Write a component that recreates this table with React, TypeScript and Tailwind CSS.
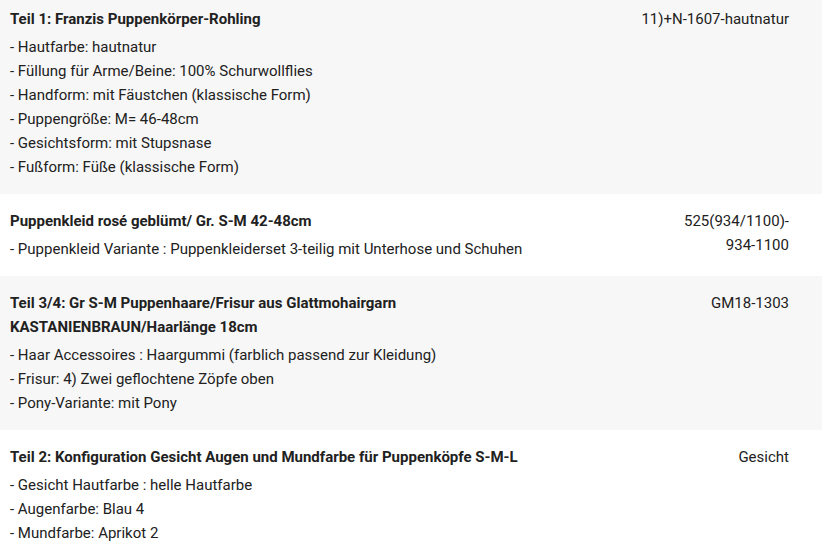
import React from "react";

type Row = { title: string[]; items: string[]; sku: string[]; shaded: boolean };

const rows: Row[] = [
  {
    title: ["Teil 1: Franzis Puppenkörper-Rohling"],
    items: [
      "- Hautfarbe: hautnatur",
      "- Füllung für Arme/Beine: 100% Schurwollflies",
      "- Handform: mit Fäustchen (klassische Form)",
      "- Puppengröße: M= 46-48cm",
      "- Gesichtsform: mit Stupsnase",
      "- Fußform: Füße (klassische Form)",
    ],
    sku: ["11)+N-1607-hautnatur"],
    shaded: true,
  },
  {
    title: ["Puppenkleid rosé geblümt/ Gr. S-M 42-48cm"],
    items: ["- Puppenkleid Variante : Puppenkleiderset 3-teilig mit Unterhose und Schuhen"],
    sku: ["525(934/1100)-", "934-1100"],
    shaded: false,
  },
  {
    title: ["Teil 3/4: Gr S-M Puppenhaare/Frisur aus Glattmohairgarn", "KASTANIENBRAUN/Haarlänge 18cm"],
    items: [
      "- Haar Accessoires : Haargummi (farblich passend zur Kleidung)",
      "- Frisur: 4) Zwei geflochtene Zöpfe oben",
      "- Pony-Variante: mit Pony",
    ],
    sku: ["GM18-1303"],
    shaded: true,
  },
  {
    title: ["Teil 2: Konfiguration Gesicht Augen und Mundfarbe für Puppenköpfe S-M-L"],
    items: ["- Gesicht Hautfarbe : helle Hautfarbe", "- Augenfarbe: Blau 4", "- Mundfarbe: Aprikot 2"],
    sku: ["Gesicht"],
    shaded: false,
  },
];

export default function App() {
  return (
    <div className="w-[822px] h-[551px] overflow-hidden bg-white text-[15px] leading-[24px] text-[#212121] font-['Roboto','Liberation_Sans',sans-serif]">
      <div className="-mt-[8px]">
        {rows.map((r, i) => (
          <div key={i} className={`flex py-[15px] pl-[10px] pr-[33px] ${r.shaded ? "bg-[#f7f7f7]" : "bg-white"}`}>
            <div className="flex-1">
              <div className="font-bold mb-[4px]">
                {r.title.map((t) => (
                  <div key={t}>{t}</div>
                ))}
              </div>
              {r.items.map((it) => (
                <div key={it}>{it}</div>
              ))}
            </div>
            <div className="w-[160px] shrink-0 text-right">
              {r.sku.map((s) => (
                <div key={s}>{s}</div>
              ))}
            </div>
          </div>
        ))}
      </div>
    </div>
  );
}
